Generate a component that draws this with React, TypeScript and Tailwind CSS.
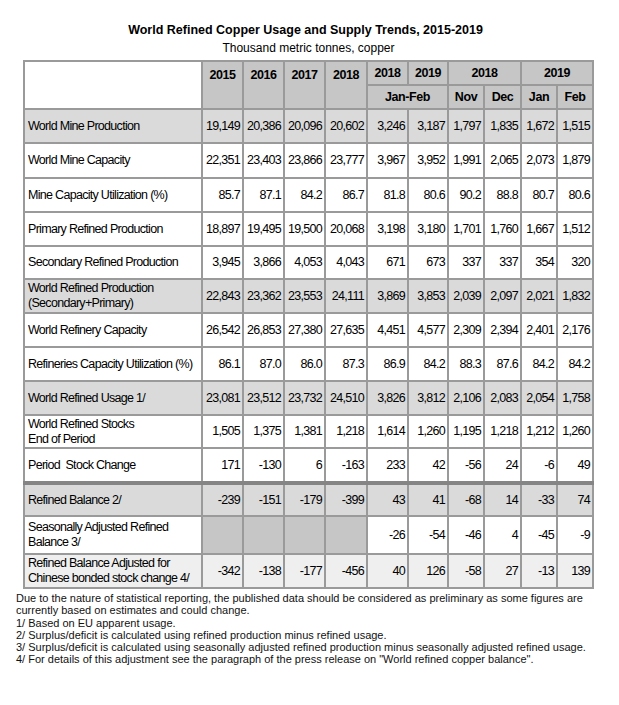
const cols = [41, 41, 41, 42, 41, 40, 36, 37, 36, 36];

type Row = {
    label: string[];
    vals: string[];
    bg: string;
    h: string;
    blankYears?: boolean;
    thickTop?: boolean;
};

const rows: Row[] = [
    { label: ["World Mine Production"], vals: ["19,149", "20,386", "20,096", "20,602", "3,246", "3,187", "1,797", "1,835", "1,672", "1,515"], bg: "bg-[#dadada]", h: "h-[34px]" },
    { label: ["World Mine Capacity"], vals: ["22,351", "23,403", "23,866", "23,777", "3,967", "3,952", "1,991", "2,065", "2,073", "1,879"], bg: "bg-white", h: "h-[35px]" },
    { label: ["Mine Capacity Utilization (%)"], vals: ["85.7", "87.1", "84.2", "86.7", "81.8", "80.6", "90.2", "88.8", "80.7", "80.6"], bg: "bg-white", h: "h-[34px]" },
    { label: ["Primary Refined Production"], vals: ["18,897", "19,495", "19,500", "20,068", "3,198", "3,180", "1,701", "1,760", "1,667", "1,512"], bg: "bg-white", h: "h-[34px]" },
    { label: ["Secondary Refined Production"], vals: ["3,945", "3,866", "4,053", "4,043", "671", "673", "337", "337", "354", "320"], bg: "bg-white", h: "h-[33px]" },
    { label: ["World Refined Production", "(Secondary+Primary)"], vals: ["22,843", "23,362", "23,553", "24,111", "3,869", "3,853", "2,039", "2,097", "2,021", "1,832"], bg: "bg-[#dadada]", h: "h-[34px]" },
    { label: ["World Refinery Capacity"], vals: ["26,542", "26,853", "27,380", "27,635", "4,451", "4,577", "2,309", "2,394", "2,401", "2,176"], bg: "bg-white", h: "h-[34px]" },
    { label: ["Refineries Capacity Utilization (%)"], vals: ["86.1", "87.0", "86.0", "87.3", "86.9", "84.2", "88.3", "87.6", "84.2", "84.2"], bg: "bg-white", h: "h-[34px]" },
    { label: ["World Refined Usage 1/"], vals: ["23,081", "23,512", "23,732", "24,510", "3,826", "3,812", "2,106", "2,083", "2,054", "1,758"], bg: "bg-[#dadada]", h: "h-[34px]" },
    { label: ["World Refined Stocks", "End of Period"], vals: ["1,505", "1,375", "1,381", "1,218", "1,614", "1,260", "1,195", "1,218", "1,212", "1,260"], bg: "bg-white", h: "h-[33px]" },
    { label: ["Period  Stock Change"], vals: ["171", "-130", "6", "-163", "233", "42", "-56", "24", "-6", "49"], bg: "bg-white", h: "h-[35px]" },
    { label: ["Refined Balance 2/"], vals: ["-239", "-151", "-179", "-399", "43", "41", "-68", "14", "-33", "74"], bg: "bg-[#dadada]", h: "h-[33px]", thickTop: true },
    { label: ["Seasonally Adjusted Refined", "Balance 3/"], vals: ["", "", "", "", "-26", "-54", "-46", "4", "-45", "-9"], bg: "bg-white", h: "h-[38px]", blankYears: true },
    { label: ["Refined Balance Adjusted for", "Chinese bonded stock change 4/"], vals: ["-342", "-138", "-177", "-456", "40", "126", "-58", "27", "-13", "139"], bg: "bg-[#efefef]", h: "h-[34px]" },
];

const cell = "border-2 border-[#9a9a9a]";
const head = "bg-[#c6c6c6] font-bold text-center tracking-[-0.4px]";

export default function App() {
    return (
        <div className="w-[619px] h-[705px] bg-white font-['Liberation_Sans',Arial,sans-serif] text-black">
            <div className="pt-[22px] text-center">
                <div className="text-[12.5px] font-bold leading-[16px] pr-[8px]">
                    World Refined Copper Usage and Supply Trends, 2015-2019
                </div>
                <div className="text-[12px] leading-[16px] mt-[2px] pr-[2px]">Thousand metric tonnes, copper</div>
            </div>

            <table className="ml-[23px] mt-[4px] w-[569px] table-fixed border-collapse border-2 border-[#808080] text-[12.5px] tracking-[-0.7px]">
                <colgroup>
                    <col className="w-[178px]" />
                    {cols.map((w, i) => (
                        <col key={i} style={{ width: w }} />
                    ))}
                </colgroup>
                <thead>
                    <tr className="h-[24px]">
                        <td rowSpan={2} className={`${cell} bg-white`}></td>
                        {["2015", "2016", "2017", "2018"].map((y) => (
                            <td key={y} rowSpan={2} className={`${cell} ${head} align-top pt-[4px]`}>
                                {y}
                            </td>
                        ))}
                        <td className={`${cell} ${head}`}>2018</td>
                        <td className={`${cell} ${head}`}>2019</td>
                        <td colSpan={2} className={`${cell} ${head}`}>2018</td>
                        <td colSpan={2} className={`${cell} ${head}`}>2019</td>
                    </tr>
                    <tr className="h-[24px]">
                        <td colSpan={2} className={`${cell} ${head}`}>Jan-Feb</td>
                        <td className={`${cell} ${head}`}>Nov</td>
                        <td className={`${cell} ${head}`}>Dec</td>
                        <td className={`${cell} ${head}`}>Jan</td>
                        <td className={`${cell} ${head}`}>Feb</td>
                    </tr>
                </thead>
                <tbody>
                    {rows.map((r, i) => (
                        <tr key={i} className={`${r.h} ${r.thickTop ? "border-t-[4px] border-t-[#858585]" : ""}`}>
                            <td className={`${cell} ${r.blankYears ? "bg-white" : r.bg} pl-[3px] leading-[15px] whitespace-pre`}>
                                {r.label.map((l, j) => (
                                    <div key={j}>{l}</div>
                                ))}
                            </td>
                            {r.vals.map((v, j) => (
                                <td
                                    key={j}
                                    className={`${cell} ${r.blankYears && j < 4 ? "bg-[#c6c6c6]" : r.bg} text-right pr-[2px] whitespace-nowrap`}
                                >
                                    {v}
                                </td>
                            ))}
                        </tr>
                    ))}
                </tbody>
            </table>

            <div className="pl-[16px] pt-[3px] text-[11px] leading-[12.3px] text-[#111]">
                <p>Due to the nature of statistical reporting, the published data should be considered as preliminary as some figures are</p>
                <p>currently based on estimates and could change.</p>
                <p>1/ Based on EU apparent usage.</p>
                <p>2/ Surplus/deficit is calculated using refined production minus refined usage.</p>
                <p>3/ Surplus/deficit is calculated using seasonally adjusted refined production minus seasonally adjusted refined usage.</p>
                <p>4/ For details of this adjustment see the paragraph of the press release on "World refined copper balance".</p>
            </div>
        </div>
    );
}
